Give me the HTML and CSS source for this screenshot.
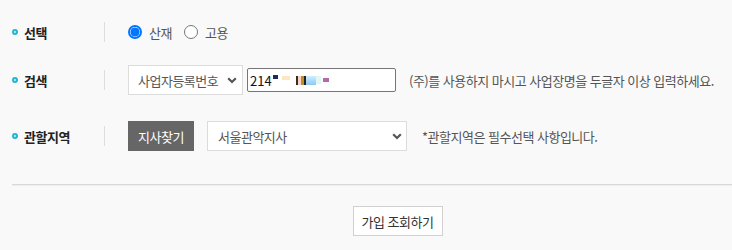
FILE: index.html
```html
<!DOCTYPE html>
<html lang="ko">
<head>
<meta charset="utf-8">
<link rel="stylesheet" href="styles.css">
</head>
<body>
<div class="form">
  <div class="row row-first">
    <div class="label"><span class="dot"></span><span>선택</span></div>
    <span class="divider"></span>
    <div class="controls">
      <label class="radio-item"><span class="radio checked"></span><span>산재</span></label>
      <label class="radio-item"><span class="radio"></span><span>고용</span></label>
    </div>
  </div>
  <div class="row row-second">
    <div class="label"><span class="dot"></span><span>검색</span></div>
    <span class="divider"></span>
    <div class="controls">
      <div class="select select-type"><span>사업자등록번호</span><svg class="chev" width="10" height="7" viewBox="0 0 10 7"><polyline points="1.2,1.2 5,5 8.8,1.2" fill="none" stroke="#555" stroke-width="2.2"/></svg></div>
      <div class="input"><span>214</span><span class="blur"><i class="b1"></i><i class="b2"></i><i class="b3"></i><i class="b4"></i><i class="b5"></i><i class="b6"></i></span></div>
      <span class="help help-search">(주)를 사용하지 마시고 사업장명을 두글자 이상 입력하세요.</span>
    </div>
  </div>
  <div class="row row-third">
    <div class="label"><span class="dot"></span><span>관할지역</span></div>
    <span class="divider"></span>
    <div class="controls">
      <button class="btn-dark">지사찾기</button>
      <div class="select select-branch"><span>서울관악지사</span><svg class="chev" width="10" height="7" viewBox="0 0 10 7"><polyline points="1.2,1.2 5,5 8.8,1.2" fill="none" stroke="#555" stroke-width="2.2"/></svg></div>
      <span class="help help-branch">*관할지역은 필수선택 사항입니다.</span>
    </div>
  </div>
  <div class="rule"></div>
  <div class="actions">
    <button class="btn-light">가입 조회하기</button>
  </div>
</div>
</body>
</html>
```
FILE: styles.css
```css
* { box-sizing: border-box; }
html, body { margin: 0; padding: 0; }
body {
  background: #f9f9f9;
  font-family: "Noto Sans CJK KR", "Noto Sans", sans-serif;
  font-size: 13px;
  letter-spacing: -0.5px;
  color: #555;
  width: 732px;
  height: 250px;
  overflow: hidden;
}
.form { padding: 17px 0 0 12px; }
.row { display: flex; align-items: center; height: 30px; }
.row-second { margin-top: 18px; }
.row-third { margin-top: 26px; }
.label {
  width: 92px;
  display: flex;
  align-items: center;
  gap: 6px;
  font-weight: bold;
  color: #222;
}
.dot {
  width: 6px; height: 6px;
  border-radius: 50%;
  border: 2px solid #27b5cc;
  background: #cfeff4;
  flex: none;
}
.divider { width: 1px; height: 20px; background: #ddd; margin-right: 23px; }
.controls { display: flex; align-items: center; }
.radio-item { display: flex; align-items: center; gap: 7px; margin-right: 12px; color: #555; }
.radio {
  width: 14px; height: 14px;
  border-radius: 50%;
  border: 1px solid #767676;
  background: #fff;
  display: inline-block;
}
.radio.checked {
  border: 2px solid #0075ff;
  background: radial-gradient(circle, #0075ff 0 4.2px, #fff 4.8px);
}
.select {
  display: flex; align-items: center; justify-content: space-between;
  height: 30px;
  background: #fff;
  border: 1px solid #dcdcdc;
  color: #555;
}
.select-type { width: 115px; padding: 0 5px 0 9px; }
.select-branch { width: 200px; padding: 0 4px 0 10px; margin-left: 13px; }
.chev { flex: none; }
.input {
  width: 149px; height: 24px;
  margin-left: 4px;
  background: #fff;
  border: 1px solid #767676;
  border-radius: 2px;
  display: flex; align-items: center;
  padding-left: 2px;
  color: #111;
  letter-spacing: 0;
}
.blur { display: flex; align-items: center; margin-left: 1px; }
.blur i { display: inline-block; height: 4px; }
.b1 { width: 5px; background: #1b2a66; margin-top: -6px; }
.b2 { width: 8px; background: #fde6c4; margin-left: 4px; margin-top: -4px; }
.b3 { width: 10px; height: 9px !important; background: linear-gradient(90deg, #3a2a22 0 2px, #f3d8c8 2px 5px, #c98a2a 5px 8px, #222 8px 10px); margin-left: 6px; }
.b4 { width: 10px; height: 9px !important; background: linear-gradient(#cfefff, #8cc8ef); }
.b5 { width: 5px; height: 8px !important; background: #dff7f5; }
.b6 { width: 6px; background: #b06aa8; margin-left: 2px; }
.help { color: #555; }
.help-search { margin-left: 13px; }
.help-branch { margin-left: 15px; }
.btn-dark {
  width: 66px; height: 30px;
  background: #666; color: #fff;
  border: 0; padding: 0;
  font: inherit; letter-spacing: -0.5px;
}
.rule { height: 2px; margin-top: 33px; border-top: 1px solid #d8d8d8; border-bottom: 1px solid #eee; }
.actions { display: flex; justify-content: center; padding-right: 12px; margin-top: 20px; }
.btn-light {
  margin-left: 63px;
  width: 90px; height: 30px;
  background: #fff;
  border: 1px solid #d0d0d0;
  color: #333;
  font: inherit; letter-spacing: -0.5px;
  padding: 0;
}
```
